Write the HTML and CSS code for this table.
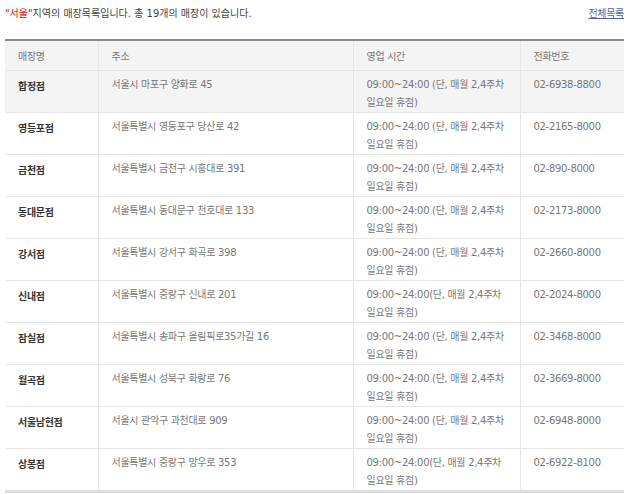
FILE: index.html
```html
<!DOCTYPE html>
<html lang="ko">
<head>
<meta charset="utf-8">
<link rel="stylesheet" href="styles.css">
</head>
<body>
<div class="wrap">
  <div class="top">
    <p class="summary"><span class="city">"서울"</span>지역의 매장목록입니다. 총 19개의 매장이 있습니다.</p>
    <a class="all" href="#">전체목록</a>
  </div>
  <table class="stores">
    <colgroup>
      <col class="c1"><col class="c2"><col class="c3"><col class="c4">
    </colgroup>
    <thead>
      <tr><th>매장명</th><th>주소</th><th>영업 시간</th><th>전화번호</th></tr>
    </thead>
    <tbody>
      <tr class="on"><td class="name">합정점</td><td>서울시 마포구 양화로 45</td><td>09:00~24:00 (단, 매월 2,4주차<br>일요일 휴점)</td><td>02-6938-8800</td></tr>
      <tr><td class="name">영등포점</td><td>서울특별시 영등포구 당산로 42</td><td>09:00~24:00 (단, 매월 2,4주차<br>일요일 휴점)</td><td>02-2165-8000</td></tr>
      <tr><td class="name">금천점</td><td>서울특별시 금천구 시흥대로 391</td><td>09:00~24:00 (단, 매월 2,4주차<br>일요일 휴점)</td><td>02-890-8000</td></tr>
      <tr><td class="name">동대문점</td><td>서울특별시 동대문구 천호대로 133</td><td>09:00~24:00 (단, 매월 2,4주차<br>일요일 휴점)</td><td>02-2173-8000</td></tr>
      <tr><td class="name">강서점</td><td>서울특별시 강서구 화곡로 398</td><td>09:00~24:00 (단, 매월 2,4주차<br>일요일 휴점)</td><td>02-2660-8000</td></tr>
      <tr><td class="name">신내점</td><td>서울특별시 중랑구 신내로 201</td><td>09:00~24:00(단, 매월 2,4주차<br>일요일 휴점)</td><td>02-2024-8000</td></tr>
      <tr><td class="name">잠실점</td><td>서울특별시 송파구 올림픽로35가길 16</td><td>09:00~24:00 (단, 매월 2,4주차<br>일요일 휴점)</td><td>02-3468-8000</td></tr>
      <tr><td class="name">월곡점</td><td>서울특별시 성북구 화랑로 76</td><td>09:00~24:00 (단, 매월 2,4주차<br>일요일 휴점)</td><td>02-3669-8000</td></tr>
      <tr><td class="name">서울남현점</td><td>서울시 관악구 과천대로 909</td><td>09:00~24:00 (단, 매월 2,4주차<br>일요일 휴점)</td><td>02-6948-8000</td></tr>
      <tr><td class="name">상봉점</td><td>서울특별시 중랑구 망우로 353</td><td>09:00~24:00(단, 매월 2,4주차<br>일요일 휴점)</td><td>02-6922-8100</td></tr>
    </tbody>
  </table>
</div>
</body>
</html>
```

FILE: styles.css
```css
html, body {
  margin: 0;
  padding: 0;
  background: #fff;
}
body {
  font-family: "DejaVu Sans", "Noto Sans CJK KR", sans-serif;
  font-size: 10px;
  letter-spacing: -0.3px;
  color: #666;
}
.wrap {
  padding: 5px 4px 0 5px;
}
.top {
  display: flex;
  justify-content: space-between;
  align-items: center;
  height: 18px;
  margin-bottom: 16px;
}
.summary {
  margin: 0;
  color: #444;
  line-height: 18px;
  letter-spacing: 0;
}
.city {
  color: #e60012;
}
.all {
  color: #4d5fa6;
  text-decoration: underline;
  line-height: 18px;
}
.stores {
  width: 619px;
  border-collapse: collapse;
  table-layout: fixed;
  border-top: 2px solid #8a8a8a;
  border-bottom: 3px solid #dcdcdc;
}
.c1 { width: 93px; }
.c2 { width: 255px; }
.c3 { width: 167px; }
.c4 { width: 104px; }
.stores th {
  height: 30px;
  padding: 0 0 0 13px;
  text-align: left;
  font-weight: normal;
  color: #777;
  background: #f4f4f4;
  border-left: 1px solid #e6e6e6;
  border-bottom: 1px solid #e6e6e6;
  box-sizing: border-box;
}
.stores td {
  height: 42px;
  padding: 5px 0 0 13px;
  vertical-align: top;
  line-height: 18px;
  color: #777;
  border-left: 1px solid #e6e6e6;
  border-bottom: 1px solid #e6e6e6;
  box-sizing: border-box;
}
.stores th:first-child,
.stores td:first-child {
  border-left: 0;
}
.stores td.name {
  padding-top: 7px;
  font-weight: bold;
  color: #333;
}
.stores tr.on td {
  background: #f4f4f4;
}
```
